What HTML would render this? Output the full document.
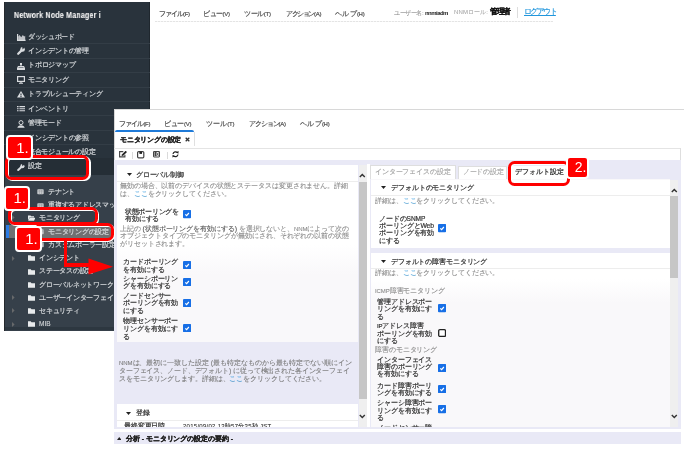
<!DOCTYPE html>
<html><head><meta charset="utf-8"><style>
html,body{margin:0;padding:0;width:687px;height:449px;overflow:hidden;background:#fff;position:relative}
body{font-family:"Liberation Sans",sans-serif}
.t{position:absolute;white-space:nowrap;will-change:transform}
a{color:inherit}
</style></head><body>
<div style="position:absolute;left:4px;top:2px;width:146px;height:328.5px;background:#29333c"></div>
<div style="position:absolute;left:4px;top:173px;width:146px;height:157.5px;background:#36404a"></div>
<div style="position:absolute;left:4px;top:327.3px;width:146px;height:3.2px;background:#2d3740"></div>
<div style="position:absolute;left:4px;top:2px;width:1px;height:328.5px;background:#25292d"></div>
<div style="position:absolute;left:149px;top:2px;width:1px;height:171px;background:#1f272e"></div>
<div class="t" style="left:13.8px;top:10.60px;font-size:8.2px;line-height:10px;color:#f2f2f2;font-weight:bold;letter-spacing:0.25px;-webkit-text-stroke:0.1px #f2f2f2;transform:scaleX(0.86);transform-origin:0 50%">Network Node Manager i</div>
<div style="position:absolute;left:4px;top:43px;width:146px;height:1px;background:#333d46"></div>
<div style="position:absolute;left:4px;top:58px;width:146px;height:1px;background:#333d46"></div>
<div style="position:absolute;left:4px;top:72px;width:146px;height:1px;background:#333d46"></div>
<div style="position:absolute;left:4px;top:87px;width:146px;height:1px;background:#333d46"></div>
<div style="position:absolute;left:4px;top:101px;width:146px;height:1px;background:#333d46"></div>
<div style="position:absolute;left:4px;top:115px;width:146px;height:1px;background:#333d46"></div>
<div style="position:absolute;left:4px;top:130px;width:146px;height:1px;background:#333d46"></div>
<div style="position:absolute;left:4px;top:144px;width:146px;height:1px;background:#333d46"></div>
<div style="position:absolute;left:4px;top:158px;width:146px;height:1px;background:#333d46"></div>
<div style="position:absolute;left:4px;top:158px;width:146px;height:17px;background:#252e36"></div>
<div class="t" style="left:28px;top:31.70px;font-size:7px;line-height:10px;color:#d5d8db;letter-spacing:-0.333px;-webkit-text-stroke:0.18px #d5d8db;">ダッシュボード</div>
<div class="t" style="left:28px;top:46.40px;font-size:7px;line-height:10px;color:#d5d8db;letter-spacing:-0.25px;-webkit-text-stroke:0.18px #d5d8db;">インシデントの管理</div>
<div class="t" style="left:28px;top:60.40px;font-size:7px;line-height:10px;color:#d5d8db;letter-spacing:-0.25px;-webkit-text-stroke:0.18px #d5d8db;">トポロジマップ</div>
<div class="t" style="left:28px;top:74.60px;font-size:7px;line-height:10px;color:#d5d8db;letter-spacing:-0.26px;-webkit-text-stroke:0.18px #d5d8db;">モニタリング</div>
<div class="t" style="left:28px;top:89.00px;font-size:7px;line-height:10px;color:#d5d8db;letter-spacing:-0.25px;-webkit-text-stroke:0.18px #d5d8db;">トラブルシューティング</div>
<div class="t" style="left:28px;top:103.50px;font-size:7px;line-height:10px;color:#d5d8db;letter-spacing:-0.28px;-webkit-text-stroke:0.18px #d5d8db;">インベントリ</div>
<div class="t" style="left:28px;top:117.80px;font-size:7px;line-height:10px;color:#d5d8db;letter-spacing:-0.3px;-webkit-text-stroke:0.18px #d5d8db;">管理モード</div>
<div class="t" style="left:28px;top:132.50px;font-size:7px;line-height:10px;color:#d5d8db;letter-spacing:-0.25px;-webkit-text-stroke:0.18px #d5d8db;">インシデントの参照</div>
<div class="t" style="left:28px;top:147.00px;font-size:7px;line-height:10px;color:#d5d8db;letter-spacing:-0.256px;-webkit-text-stroke:0.18px #d5d8db;">統合モジュールの設定</div>
<div class="t" style="left:28px;top:161.00px;font-size:7px;line-height:10px;color:#d5d8db;letter-spacing:0.4px;-webkit-text-stroke:0.18px #d5d8db;">設定</div>
<svg style="position:absolute;left:17px;top:33.6px" width="9" height="7" viewBox="0 0 9 7"><path d="M0.6 0 V6.4 H8.6" stroke="#d9dcdf" stroke-width="1.2" fill="none"/><path d="M1.2 6 V2.5 L2.6 1 L4.2 3.2 L5.8 1 L7.2 2.5 L8.2 1.8 V6 Z" fill="#d9dcdf" opacity="0.85"/></svg>
<svg style="position:absolute;left:17px;top:47px" width="8" height="8" viewBox="0 0 8 8"><path d="M1.2 6.8 L4.6 3.4" stroke="#d9dcdf" stroke-width="2.2" stroke-linecap="round"/><circle cx="5.6" cy="2.4" r="2.3" fill="#d9dcdf"/><path d="M5.6 2.4 L8 0 L8 -1 L5 -1 Z" fill="#29333c"/></svg>
<svg style="position:absolute;left:17px;top:62.5px" width="8" height="7" viewBox="0 0 8 7"><rect x="3" y="0" width="2" height="2" fill="#d9dcdf"/><path d="M4 2 V3.5 M1 5 V3.5 H7 V5" stroke="#d9dcdf" stroke-width="1" fill="none"/><rect x="0" y="4.5" width="8" height="2.5" rx="0.5" fill="#d9dcdf"/></svg>
<svg style="position:absolute;left:17px;top:75.5px" width="8" height="8" viewBox="0 0 8 8"><rect x="0.6" y="0.6" width="6.8" height="4.8" stroke="#d9dcdf" stroke-width="1.2" fill="none"/><path d="M2 7.2 H6 M4 5.5 V7" stroke="#d9dcdf" stroke-width="1.1"/></svg>
<svg style="position:absolute;left:17.3px;top:90.6px" width="8" height="7" viewBox="0 0 8 7"><path d="M4 0 L8 6.6 H0 Z" fill="#d9dcdf"/><path d="M4 2.4 V4.4 M4 5.1 V6" stroke="#29333c" stroke-width="1.1"/></svg>
<svg style="position:absolute;left:17.4px;top:105.6px" width="8" height="6" viewBox="0 0 8 6"><path d="M0 0.6 H1.6 M2.4 0.6 H8 M0 2.7 H1.6 M2.4 2.7 H8 M0 4.8 H1.6 M2.4 4.8 H8" stroke="#d9dcdf" stroke-width="1.1"/></svg>
<svg style="position:absolute;left:17.4px;top:119.5px" width="8" height="8" viewBox="0 0 8 8"><circle cx="4" cy="2.6" r="2" stroke="#d9dcdf" stroke-width="1" fill="none"/><path d="M0.3 7.8 Q1 5.2 4 5.2 Q7 5.2 7.7 7.8 Z" fill="#d9dcdf"/></svg>
<svg style="position:absolute;left:17.4px;top:163.5px" width="8" height="7" viewBox="0 0 8 7"><path d="M1.2 6 L4.4 3" stroke="#d9dcdf" stroke-width="2" stroke-linecap="round"/><circle cx="5.4" cy="2.2" r="2.1" fill="#d9dcdf"/><path d="M5.4 2.2 L7.8 0 L7.8 -1 L4.8 -1 Z" fill="#252e36"/></svg>
<div style="position:absolute;left:8.9px;top:224.5px;width:104px;height:13px;background:#6f7072"></div>
<div style="position:absolute;left:6.2px;top:224.5px;width:2.7px;height:13.3px;background:#2a7be4"></div>
<div class="t" style="left:48px;top:187.10px;font-size:7px;line-height:10px;color:#d5d8db;letter-spacing:-0.22px;-webkit-text-stroke:0.18px #d5d8db;">テナント</div>
<svg style="position:absolute;left:37px;top:189.4px" width="7" height="5.5" viewBox="0 0 7 5.5"><rect x="0.3" y="0.3" width="6.4" height="4.9" rx="0.8" fill="#c7cacd"/><path d="M0 2 H7 M2.4 1 V5.5 M4.6 1 V5.5" stroke="#8d9196" stroke-width="0.5"/></svg>
<div class="t" style="left:48px;top:200.30px;font-size:7px;line-height:10px;color:#d5d8db;letter-spacing:-0.22px;-webkit-text-stroke:0.18px #d5d8db;">重複するアドレスマッピング</div>
<svg style="position:absolute;left:37px;top:202.6px" width="7" height="5.5" viewBox="0 0 7 5.5"><rect x="0.3" y="0.3" width="6.4" height="4.9" rx="0.8" fill="#c7cacd"/><path d="M0 2 H7 M2.4 1 V5.5 M4.6 1 V5.5" stroke="#8d9196" stroke-width="0.5"/></svg>
<div class="t" style="left:38.5px;top:212.90px;font-size:7px;line-height:10px;color:#d5d8db;letter-spacing:-0.22px;-webkit-text-stroke:0.18px #d5d8db;">モニタリング</div>
<svg style="position:absolute;left:27.6px;top:215.1px" width="7.5" height="6" viewBox="0 0 7.5 6"><path d="M0 0.5 H2.5 L3.2 1.3 H6 V2.5 H1.5 L0 5.5 Z" fill="#e8eaec"/><path d="M1.6 2.8 H7.5 L6 5.8 H0.2 Z" fill="#e8eaec"/></svg>
<svg style="position:absolute;left:11.6px;top:215.4px" width="3" height="5" viewBox="0 0 3 5"><path d="M0 0 L2.6 2.5 L0 5 Z" fill="#67696b"/></svg>
<div class="t" style="left:48px;top:226.70px;font-size:7px;line-height:10px;color:#d5d8db;letter-spacing:-0.22px;-webkit-text-stroke:0.18px #d5d8db;">モニタリングの設定</div>
<svg style="position:absolute;left:37px;top:229.0px" width="7" height="5.5" viewBox="0 0 7 5.5"><rect x="0.3" y="0.3" width="6.4" height="4.9" rx="0.8" fill="#c7cacd"/><path d="M0 2 H7 M2.4 1 V5.5 M4.6 1 V5.5" stroke="#8d9196" stroke-width="0.5"/></svg>
<div class="t" style="left:48px;top:239.90px;font-size:7px;line-height:10px;color:#d5d8db;letter-spacing:-0.22px;-webkit-text-stroke:0.18px #d5d8db;">カスタムポーラー設定</div>
<svg style="position:absolute;left:37px;top:242.2px" width="7" height="5.5" viewBox="0 0 7 5.5"><rect x="0.3" y="0.3" width="6.4" height="4.9" rx="0.8" fill="#c7cacd"/><path d="M0 2 H7 M2.4 1 V5.5 M4.6 1 V5.5" stroke="#8d9196" stroke-width="0.5"/></svg>
<div class="t" style="left:39.2px;top:253.10px;font-size:7px;line-height:10px;color:#d5d8db;letter-spacing:-0.22px;-webkit-text-stroke:0.18px #d5d8db;">インシデント</div>
<svg style="position:absolute;left:27.6px;top:255.3px" width="7" height="6" viewBox="0 0 7 6"><path d="M0 0.3 H2.7 L3.5 1.2 H7 V5.8 H0 Z" fill="#e8eaec"/></svg>
<svg style="position:absolute;left:11.6px;top:255.6px" width="3" height="5" viewBox="0 0 3 5"><path d="M0 0 L2.6 2.5 L0 5 Z" fill="#67696b"/></svg>
<div class="t" style="left:39.2px;top:266.30px;font-size:7px;line-height:10px;color:#d5d8db;letter-spacing:-0.22px;-webkit-text-stroke:0.18px #d5d8db;">ステータスの設定</div>
<svg style="position:absolute;left:27.6px;top:268.5px" width="7" height="6" viewBox="0 0 7 6"><path d="M0 0.3 H2.7 L3.5 1.2 H7 V5.8 H0 Z" fill="#e8eaec"/></svg>
<div class="t" style="left:39.2px;top:279.50px;font-size:7px;line-height:10px;color:#d5d8db;letter-spacing:-0.22px;-webkit-text-stroke:0.18px #d5d8db;">グローバルネットワーク管理</div>
<svg style="position:absolute;left:27.6px;top:281.7px" width="7" height="6" viewBox="0 0 7 6"><path d="M0 0.3 H2.7 L3.5 1.2 H7 V5.8 H0 Z" fill="#e8eaec"/></svg>
<div class="t" style="left:39.2px;top:292.70px;font-size:7px;line-height:10px;color:#d5d8db;letter-spacing:-0.22px;-webkit-text-stroke:0.18px #d5d8db;">ユーザーインターフェイス</div>
<svg style="position:absolute;left:27.6px;top:294.9px" width="7" height="6" viewBox="0 0 7 6"><path d="M0 0.3 H2.7 L3.5 1.2 H7 V5.8 H0 Z" fill="#e8eaec"/></svg>
<svg style="position:absolute;left:11.6px;top:295.2px" width="3" height="5" viewBox="0 0 3 5"><path d="M0 0 L2.6 2.5 L0 5 Z" fill="#67696b"/></svg>
<div class="t" style="left:39.2px;top:305.90px;font-size:7px;line-height:10px;color:#d5d8db;letter-spacing:-0.22px;-webkit-text-stroke:0.18px #d5d8db;">セキュリティ</div>
<svg style="position:absolute;left:27.6px;top:308.1px" width="7" height="6" viewBox="0 0 7 6"><path d="M0 0.3 H2.7 L3.5 1.2 H7 V5.8 H0 Z" fill="#e8eaec"/></svg>
<svg style="position:absolute;left:11.6px;top:308.4px" width="3" height="5" viewBox="0 0 3 5"><path d="M0 0 L2.6 2.5 L0 5 Z" fill="#67696b"/></svg>
<div class="t" style="left:39.2px;top:319.10px;font-size:6.5px;line-height:10px;color:#d5d8db;-webkit-text-stroke:0.1px #d5d8db;">MIB</div>
<svg style="position:absolute;left:27.6px;top:321.3px" width="7" height="6" viewBox="0 0 7 6"><path d="M0 0.3 H2.7 L3.5 1.2 H7 V5.8 H0 Z" fill="#e8eaec"/></svg>
<svg style="position:absolute;left:11.6px;top:321.6px" width="3" height="5" viewBox="0 0 3 5"><path d="M0 0 L2.6 2.5 L0 5 Z" fill="#67696b"/></svg>
<div class="t" style="left:158.9px;top:8.60px;font-size:7px;line-height:10px;color:#505050;letter-spacing:-1.0px;-webkit-text-stroke:0.2px #505050;">ファイル<span style="font-size:6px;letter-spacing:-0.3px">(F)</span></div>
<div class="t" style="left:203px;top:8.60px;font-size:7px;line-height:10px;color:#505050;letter-spacing:-0.5px;-webkit-text-stroke:0.2px #505050;">ビュー<span style="font-size:6px;letter-spacing:-0.3px">(V)</span></div>
<div class="t" style="left:244.3px;top:8.60px;font-size:7px;line-height:10px;color:#505050;letter-spacing:-0.4px;-webkit-text-stroke:0.2px #505050;">ツール<span style="font-size:6px;letter-spacing:-0.3px">(T)</span></div>
<div class="t" style="left:285.6px;top:8.60px;font-size:7px;line-height:10px;color:#505050;letter-spacing:-1.4px;-webkit-text-stroke:0.2px #505050;">アクション<span style="font-size:6px;letter-spacing:-0.3px">(A)</span></div>
<div class="t" style="left:334.7px;top:8.60px;font-size:7px;line-height:10px;color:#505050;letter-spacing:0.3px;-webkit-text-stroke:0.2px #505050;">ヘルプ<span style="font-size:6px;letter-spacing:-0.3px">(H)</span></div>
<div class="t" style="left:394px;top:7.60px;font-size:6px;line-height:10px;color:#999;letter-spacing:-0.394px;-webkit-text-stroke:0.1px #999;">ユーザー名:</div>
<div class="t" style="left:425px;top:7.50px;font-size:6px;line-height:10px;color:#222;font-weight:bold;letter-spacing:-0.545px;">nnmiadm</div>
<div class="t" style="left:454.2px;top:7.30px;font-size:6px;line-height:10px;color:#aaa;letter-spacing:0.109px;-webkit-text-stroke:0.1px #aaa;">NNMロール:</div>
<div class="t" style="left:490px;top:7.40px;font-size:8px;line-height:10px;color:#111;font-weight:bold;letter-spacing:-1.5px;-webkit-text-stroke:0.15px #111;">管理者</div>
<div style="position:absolute;left:516.5px;top:7px;width:1px;height:11px;background:#ddd"></div>
<div class="t" style="left:524.1px;top:7.30px;font-size:8px;line-height:10px;color:#2196dc;letter-spacing:-1.625px;-webkit-text-stroke:0.12px #2196dc;text-decoration:underline;text-underline-offset:0.5px">ログアウト</div>
<div style="position:absolute;left:155px;top:21px;width:398px;height:1px;background:repeating-linear-gradient(90deg,#e4e4e4 0 2px,#f6f6f6 2px 3px)"></div>
<div style="position:absolute;left:114px;top:109px;width:570px;height:337px;background:#fff;border-top:1px solid #d8d8d8;border-left:1px solid #d8d8d8;box-sizing:border-box"></div>
<div class="t" style="left:119.1px;top:119.00px;font-size:7px;line-height:10px;color:#505050;letter-spacing:-0.9px;-webkit-text-stroke:0.2px #505050;">ファイル<span style="font-size:6px;letter-spacing:-0.3px">(F)</span></div>
<div class="t" style="left:164.2px;top:119.00px;font-size:7px;line-height:10px;color:#505050;letter-spacing:-0.3px;-webkit-text-stroke:0.2px #505050;">ビュー<span style="font-size:6px;letter-spacing:-0.3px">(V)</span></div>
<div class="t" style="left:206px;top:119.00px;font-size:7px;line-height:10px;color:#505050;letter-spacing:0.1px;-webkit-text-stroke:0.2px #505050;">ツール<span style="font-size:6px;letter-spacing:-0.3px">(T)</span></div>
<div class="t" style="left:249px;top:119.00px;font-size:7px;line-height:10px;color:#505050;letter-spacing:-1.1px;-webkit-text-stroke:0.2px #505050;">アクション<span style="font-size:6px;letter-spacing:-0.3px">(A)</span></div>
<div class="t" style="left:299.5px;top:119.00px;font-size:7px;line-height:10px;color:#505050;letter-spacing:0.3px;-webkit-text-stroke:0.2px #505050;">ヘルプ<span style="font-size:6px;letter-spacing:-0.3px">(H)</span></div>
<div style="position:absolute;left:115px;top:130px;width:79px;height:2.2px;background:#1e7ad8;border-radius:2px 2px 0 0"></div>
<div style="position:absolute;left:193.5px;top:132px;width:1px;height:14px;background:#e0e0e0"></div>
<div class="t" style="left:119.7px;top:134.70px;font-size:7px;line-height:10px;color:#2a2a2a;font-weight:bold;letter-spacing:-0.213px;-webkit-text-stroke:0.25px #2a2a2a;">モニタリングの設定</div>
<svg style="position:absolute;left:184.5px;top:137.3px" width="5" height="5" viewBox="0 0 5 5"><path d="M0.7 0.7 L4.3 4.3 M4.3 0.7 L0.7 4.3" stroke="#333" stroke-width="1.3"/></svg>
<div style="position:absolute;left:114px;top:148px;width:566px;height:1px;background:#e4e4e4"></div>
<div style="position:absolute;left:679.5px;top:148px;width:1px;height:12px;background:#dedede"></div>
<svg style="position:absolute;left:119px;top:151px" width="8.5" height="7" viewBox="0 0 8.5 7"><path d="M4.3 0.6 H0.6 V5.9 H5.9 V3.8" stroke="#444" stroke-width="1.1" fill="none"/><path d="M2.6 5 L2.9 3.4 L6.6 -0.2 L8 1.1 L4.2 4.7 Z" fill="#222"/></svg>
<div style="position:absolute;left:132px;top:152px;width:1.2px;height:7px;background:#dadada"></div>
<svg style="position:absolute;left:137px;top:151px" width="7.5" height="7.5" viewBox="0 0 7.5 7.5"><rect x="0.6" y="0.6" width="6.2" height="6.2" rx="1" stroke="#444" stroke-width="1.2" fill="none"/><rect x="2.4" y="0.6" width="2.6" height="2.3" fill="#222"/></svg>
<svg style="position:absolute;left:153.2px;top:151.3px" width="7" height="6.5" viewBox="0 0 7 6.5"><rect x="0.55" y="0.55" width="5.9" height="5.4" rx="0.6" stroke="#444" stroke-width="1.1" fill="none"/><rect x="1.5" y="1" width="2" height="4.2" fill="#444"/><path d="M3.8 1.5 L5.6 4.8 M5.6 1.5 L3.8 4.8" stroke="#444" stroke-width="0.7"/></svg>
<div style="position:absolute;left:166.5px;top:152px;width:1.2px;height:7px;background:#dadada"></div>
<svg style="position:absolute;left:171.8px;top:151.2px" width="7" height="6.5" viewBox="0 0 7 6.5"><path d="M1 3 A2.6 2.6 0 0 1 5.6 1.8" stroke="#222" stroke-width="1.2" fill="none"/><path d="M6 3.5 A2.6 2.6 0 0 1 1.4 4.7" stroke="#222" stroke-width="1.2" fill="none"/><path d="M4.3 1.2 L6.6 0 L6.4 2.8 Z M2.7 5.3 L0.4 6.5 L0.6 3.7 Z" fill="#222"/></svg>
<div style="position:absolute;left:114px;top:159.5px;width:567px;height:273px;background:#e9e9f6"></div>
<div style="position:absolute;left:117px;top:164.8px;width:241px;height:177.5px;background:#fff"></div>
<div style="position:absolute;left:117px;top:245px;width:241px;height:97px;background:linear-gradient(#fff,#f9f8fa 30px)"></div>
<div style="position:absolute;left:358.6px;top:164.5px;width:8px;height:263px;background:#efefef"></div>
<div style="position:absolute;left:358.6px;top:181.8px;width:8px;height:217.2px;background:#c6c6c6"></div>
<svg style="position:absolute;left:359.3px;top:173px" width="7" height="5" viewBox="0 0 7 5"><path d="M0.8 4 L3.3 1.4 L5.8 4" stroke="#333" stroke-width="1.4" fill="none"/></svg>
<svg style="position:absolute;left:359.3px;top:413.8px" width="7" height="5" viewBox="0 0 7 5"><path d="M0.8 1 L3.3 3.6 L5.8 1" stroke="#333" stroke-width="1.4" fill="none"/></svg>
<div style="position:absolute;left:366.5px;top:163.8px;width:3.3px;height:268.5px;background:#fff"></div>
<div class="t" style="left:136.2px;top:169.60px;font-size:7px;line-height:10px;color:#333;letter-spacing:-0.25px;-webkit-text-stroke:0.2px #333;">グローバル制御</div>
<svg style="position:absolute;left:126.5px;top:172.5px" width="5" height="3" viewBox="0 0 5 3"><path d="M0 0 H5 L2.5 3 Z" fill="#222"/></svg>
<div style="position:absolute;left:117px;top:181px;width:241px;height:1px;background:#ededed"></div>
<div class="t" style="left:120.4px;top:181.00px;font-size:7px;line-height:10px;color:#8c8c8c;letter-spacing:-0.094px;-webkit-text-stroke:0.1px #8c8c8c;">無効の場合、以前のデバイスの状態とステータスは変更されません。詳細</div>
<div class="t" style="left:120.4px;top:188.90px;font-size:7px;line-height:10px;color:#8c8c8c;letter-spacing:-0.1px;-webkit-text-stroke:0.1px #8c8c8c;">は、<span style="color:#1590e0">ここ</span>をクリックしてください。</div>
<div class="t" style="left:124.7px;top:206.50px;font-size:7px;line-height:10px;color:#333;letter-spacing:-0.286px;-webkit-text-stroke:0.2px #333;">状態ポーリングを</div>
<div class="t" style="left:124.7px;top:213.60px;font-size:7px;line-height:10px;color:#333;letter-spacing:-0.15px;-webkit-text-stroke:0.2px #333;">有効にする</div>
<div class="t" style="left:120.4px;top:223.90px;font-size:7px;line-height:10px;color:#8c8c8c;letter-spacing:-0.09px;-webkit-text-stroke:0.1px #8c8c8c;">上記の <span style="color:#5a5a5a;-webkit-text-stroke:0.12px #5a5a5a">(状態ポーリングを有効にする)</span> を選択しないと、<span style="font-size:6px">NNM</span>によって次の</div>
<div class="t" style="left:120.4px;top:231.00px;font-size:7px;line-height:10px;color:#8c8c8c;letter-spacing:-0.062px;-webkit-text-stroke:0.1px #8c8c8c;">オブジェクトタイプのモニタリングが無効にされ、それぞれの以前の状態</div>
<div class="t" style="left:120.4px;top:238.80px;font-size:7px;line-height:10px;color:#8c8c8c;letter-spacing:-0.1px;-webkit-text-stroke:0.1px #8c8c8c;">がリセットされます。</div>
<svg style="position:absolute;left:182.8px;top:210.2px" width="8.4" height="8.4" viewBox="0 0 8.4 8.4"><rect x="0" y="0" width="8.2" height="8.2" rx="1" fill="#176fe6"/><path d="M2.3 4.4 L3.6 5.6 L5.9 3" stroke="#fff" stroke-width="1.2" fill="none"/></svg>
<div class="t" style="left:123px;top:256.60px;font-size:7px;line-height:10px;color:#333;letter-spacing:-0.1px;-webkit-text-stroke:0.2px #333;">カードポーリング</div>
<div class="t" style="left:123px;top:264.50px;font-size:7px;line-height:10px;color:#333;letter-spacing:-0.1px;-webkit-text-stroke:0.2px #333;">を有効にする</div>
<svg style="position:absolute;left:182.8px;top:260.9px" width="8.4" height="8.4" viewBox="0 0 8.4 8.4"><rect x="0" y="0" width="8.2" height="8.2" rx="1" fill="#176fe6"/><path d="M2.3 4.4 L3.6 5.6 L5.9 3" stroke="#fff" stroke-width="1.2" fill="none"/></svg>
<div class="t" style="left:123px;top:273.50px;font-size:7px;line-height:10px;color:#333;letter-spacing:-0.1px;-webkit-text-stroke:0.2px #333;">シャーシポーリン</div>
<div class="t" style="left:123px;top:281.40px;font-size:7px;line-height:10px;color:#333;letter-spacing:-0.1px;-webkit-text-stroke:0.2px #333;">グを有効にする</div>
<svg style="position:absolute;left:182.8px;top:277.8px" width="8.4" height="8.4" viewBox="0 0 8.4 8.4"><rect x="0" y="0" width="8.2" height="8.2" rx="1" fill="#176fe6"/><path d="M2.3 4.4 L3.6 5.6 L5.9 3" stroke="#fff" stroke-width="1.2" fill="none"/></svg>
<div class="t" style="left:123px;top:290.50px;font-size:7px;line-height:10px;color:#333;letter-spacing:-0.1px;-webkit-text-stroke:0.2px #333;">ノードセンサー</div>
<div class="t" style="left:123px;top:298.40px;font-size:7px;line-height:10px;color:#333;letter-spacing:-0.1px;-webkit-text-stroke:0.2px #333;">ポーリングを有効</div>
<div class="t" style="left:123px;top:306.30px;font-size:7px;line-height:10px;color:#333;letter-spacing:-0.1px;-webkit-text-stroke:0.2px #333;">にする</div>
<svg style="position:absolute;left:182.8px;top:299.0px" width="8.4" height="8.4" viewBox="0 0 8.4 8.4"><rect x="0" y="0" width="8.2" height="8.2" rx="1" fill="#176fe6"/><path d="M2.3 4.4 L3.6 5.6 L5.9 3" stroke="#fff" stroke-width="1.2" fill="none"/></svg>
<div class="t" style="left:123px;top:315.80px;font-size:7px;line-height:10px;color:#333;letter-spacing:-0.1px;-webkit-text-stroke:0.2px #333;">物理センサーポー</div>
<div class="t" style="left:123px;top:323.70px;font-size:7px;line-height:10px;color:#333;letter-spacing:-0.1px;-webkit-text-stroke:0.2px #333;">リングを有効にす</div>
<div class="t" style="left:123px;top:331.60px;font-size:7px;line-height:10px;color:#333;letter-spacing:-0.1px;-webkit-text-stroke:0.2px #333;">る</div>
<svg style="position:absolute;left:182.8px;top:323.9px" width="8.4" height="8.4" viewBox="0 0 8.4 8.4"><rect x="0" y="0" width="8.2" height="8.2" rx="1" fill="#176fe6"/><path d="M2.3 4.4 L3.6 5.6 L5.9 3" stroke="#fff" stroke-width="1.2" fill="none"/></svg>
<div class="t" style="left:119.4px;top:358.30px;font-size:7px;line-height:10px;color:#7c7c7c;letter-spacing:-0.056px;-webkit-text-stroke:0.1px #7c7c7c;"><span style="font-size:6px">NNM</span>は、最初に一致した設定 (最も特定なものから最も特定でない順にイン</div>
<div class="t" style="left:119.4px;top:365.90px;font-size:7px;line-height:10px;color:#7c7c7c;letter-spacing:-0.126px;-webkit-text-stroke:0.1px #7c7c7c;">ターフェイス、ノード、デフォルト) に従って検出された各インターフェイ</div>
<div class="t" style="left:119.4px;top:374.10px;font-size:7px;line-height:10px;color:#7c7c7c;letter-spacing:-0.1px;-webkit-text-stroke:0.1px #7c7c7c;">スをモニタリングします。詳細は、<span style="color:#1590e0">ここ</span>をクリックしてください。</div>
<div style="position:absolute;left:117px;top:404px;width:241px;height:23.5px;background:#fff"></div>
<svg style="position:absolute;left:126px;top:411.5px" width="5" height="3" viewBox="0 0 5 3"><path d="M0 0 H5 L2.5 3 Z" fill="#222"/></svg>
<div class="t" style="left:135.6px;top:408.00px;font-size:7px;line-height:10px;color:#333;-webkit-text-stroke:0.2px #333;">登録</div>
<div style="position:absolute;left:117px;top:420px;width:241px;height:1px;background:#ededed"></div>
<div class="t" style="left:124.3px;top:420.50px;font-size:7px;line-height:10px;color:#333;letter-spacing:-0.16px;-webkit-text-stroke:0.2px #333;">最終変更日時</div>
<div class="t" style="left:183px;top:421.00px;font-size:6px;line-height:10px;color:#333;letter-spacing:0.267px;-webkit-text-stroke:0.1px #333;">2015/09/02 13時57分35秒 JST</div>
<div style="position:absolute;left:370px;top:165px;width:86px;height:14px;background:#fff;border:1px solid #dedede;border-bottom:none;box-sizing:border-box"></div>
<div class="t" style="left:375.4px;top:167.20px;font-size:7px;line-height:10px;color:#a0a0a0;letter-spacing:-0.14px;-webkit-text-stroke:0.1px #a0a0a0;">インターフェイスの設定</div>
<div style="position:absolute;left:457.6px;top:165.5px;width:49.6px;height:13.5px;background:#fff;border:1px solid #dedede;border-bottom:none;box-sizing:border-box"></div>
<div class="t" style="left:463px;top:167.20px;font-size:7px;line-height:10px;color:#a0a0a0;letter-spacing:-0.3px;-webkit-text-stroke:0.1px #a0a0a0;">ノードの設定</div>
<div style="position:absolute;left:507.5px;top:165.5px;width:62px;height:14px;background:#fff"></div>
<div class="t" style="left:514.6px;top:166.80px;font-size:7px;line-height:10px;color:#333;font-weight:bold;letter-spacing:-0.05px;">デフォルト設定</div>
<div style="position:absolute;left:369.8px;top:179px;width:300.2px;height:249px;background:#f9f8fa"></div>
<div style="position:absolute;left:369.8px;top:179px;width:1.6px;height:249px;background:#e9e9f6"></div>
<div style="position:absolute;left:669.5px;top:179.7px;width:8.5px;height:247.8px;background:#efefef"></div>
<div style="position:absolute;left:669.5px;top:196.4px;width:8.5px;height:81.9px;background:#c6c6c6"></div>
<svg style="position:absolute;left:670.5px;top:188px" width="7" height="5" viewBox="0 0 7 5"><path d="M0.8 4 L3.3 1.4 L5.8 4" stroke="#333" stroke-width="1.4" fill="none"/></svg>
<svg style="position:absolute;left:670.5px;top:413.8px" width="7" height="5" viewBox="0 0 7 5"><path d="M0.8 1 L3.3 3.6 L5.8 1" stroke="#333" stroke-width="1.4" fill="none"/></svg>
<div style="position:absolute;left:371px;top:179.5px;width:298.5px;height:68px;background:#fff"></div>
<svg style="position:absolute;left:381.3px;top:186.3px" width="5" height="3" viewBox="0 0 5 3"><path d="M0 0 H5 L2.5 3 Z" fill="#222"/></svg>
<div class="t" style="left:390.6px;top:183.40px;font-size:7px;line-height:10px;color:#333;letter-spacing:-0.091px;-webkit-text-stroke:0.2px #333;">デフォルトのモニタリング</div>
<div style="position:absolute;left:371px;top:195px;width:299px;height:1px;background:#ededed"></div>
<div class="t" style="left:374.8px;top:195.70px;font-size:7px;line-height:10px;color:#8c8c8c;letter-spacing:-0.1px;-webkit-text-stroke:0.1px #8c8c8c;">詳細は、<span style="color:#1590e0">ここ</span>をクリックしてください。</div>
<div class="t" style="left:379.1px;top:213.60px;font-size:7px;line-height:10px;color:#333;letter-spacing:-0.1px;-webkit-text-stroke:0.2px #333;">ノードの<span style="font-size:6.6px">SNMP</span></div>
<div class="t" style="left:379.1px;top:220.90px;font-size:7px;line-height:10px;color:#333;letter-spacing:-0.1px;-webkit-text-stroke:0.2px #333;">ポーリングと<span style="font-size:6.8px">Web</span></div>
<div class="t" style="left:379.1px;top:228.20px;font-size:7px;line-height:10px;color:#333;letter-spacing:-0.1px;-webkit-text-stroke:0.2px #333;">ポーリングを有効</div>
<div class="t" style="left:379.1px;top:235.50px;font-size:7px;line-height:10px;color:#333;letter-spacing:-0.1px;-webkit-text-stroke:0.2px #333;">にする</div>
<svg style="position:absolute;left:437.9px;top:224.3px" width="8.4" height="8.4" viewBox="0 0 8.4 8.4"><rect x="0" y="0" width="8.2" height="8.2" rx="1" fill="#176fe6"/><path d="M2.3 4.4 L3.6 5.6 L5.9 3" stroke="#fff" stroke-width="1.2" fill="none"/></svg>
<div style="position:absolute;left:371px;top:247.5px;width:299px;height:5.5px;background:#e9e9f6"></div>
<div style="position:absolute;left:371px;top:253px;width:298.5px;height:26px;background:#fff"></div>
<div style="position:absolute;left:371px;top:279px;width:298.5px;height:24px;background:linear-gradient(#fff,#f9f8fa)"></div>
<svg style="position:absolute;left:381.3px;top:260.3px" width="5" height="3" viewBox="0 0 5 3"><path d="M0 0 H5 L2.5 3 Z" fill="#222"/></svg>
<div class="t" style="left:390.5px;top:257.30px;font-size:7px;line-height:10px;color:#333;letter-spacing:-0.131px;-webkit-text-stroke:0.2px #333;">デフォルトの障害モニタリング</div>
<div style="position:absolute;left:371px;top:268.2px;width:299px;height:1px;background:#ededed"></div>
<div class="t" style="left:375px;top:268.30px;font-size:7px;line-height:10px;color:#8c8c8c;letter-spacing:-0.1px;-webkit-text-stroke:0.1px #8c8c8c;">詳細は、<span style="color:#1590e0">ここ</span>をクリックしてください。</div>
<div class="t" style="left:375px;top:286.00px;font-size:7px;line-height:10px;color:#8c8c8c;letter-spacing:-0.1px;-webkit-text-stroke:0.1px #8c8c8c;"><span style="font-size:6px">ICMP</span>障害モニタリング</div>
<div class="t" style="left:377.4px;top:296.50px;font-size:7px;line-height:10px;color:#333;letter-spacing:-0.1px;-webkit-text-stroke:0.2px #333;">管理アドレスポー</div>
<div class="t" style="left:377.4px;top:304.00px;font-size:7px;line-height:10px;color:#333;letter-spacing:-0.1px;-webkit-text-stroke:0.2px #333;">リングを有効にす</div>
<div class="t" style="left:377.4px;top:311.50px;font-size:7px;line-height:10px;color:#333;letter-spacing:-0.1px;-webkit-text-stroke:0.2px #333;">る</div>
<svg style="position:absolute;left:437.7px;top:304.2px" width="8.4" height="8.4" viewBox="0 0 8.4 8.4"><rect x="0" y="0" width="8.2" height="8.2" rx="1" fill="#176fe6"/><path d="M2.3 4.4 L3.6 5.6 L5.9 3" stroke="#fff" stroke-width="1.2" fill="none"/></svg>
<div class="t" style="left:377.4px;top:321.30px;font-size:7px;line-height:10px;color:#333;letter-spacing:-0.1px;-webkit-text-stroke:0.2px #333;"><span style="font-size:6px">IP</span>アドレス障害</div>
<div class="t" style="left:377.4px;top:328.80px;font-size:7px;line-height:10px;color:#333;letter-spacing:-0.1px;-webkit-text-stroke:0.2px #333;">ポーリングを有効</div>
<div class="t" style="left:377.4px;top:336.30px;font-size:7px;line-height:10px;color:#333;letter-spacing:-0.1px;-webkit-text-stroke:0.2px #333;">にする</div>
<svg style="position:absolute;left:437.7px;top:328.9px" width="8.4" height="8.4" viewBox="0 0 8.4 8.4"><rect x="0.7" y="0.7" width="6.8" height="6.8" rx="1.2" fill="#fff" stroke="#222" stroke-width="1.3"/></svg>
<div class="t" style="left:375px;top:344.90px;font-size:7px;line-height:10px;color:#8c8c8c;letter-spacing:-0.1px;-webkit-text-stroke:0.1px #8c8c8c;">障害のモニタリング</div>
<div class="t" style="left:377.4px;top:354.50px;font-size:7px;line-height:10px;color:#333;letter-spacing:-0.1px;-webkit-text-stroke:0.2px #333;">インターフェイス</div>
<div class="t" style="left:377.4px;top:361.80px;font-size:7px;line-height:10px;color:#333;letter-spacing:-0.1px;-webkit-text-stroke:0.2px #333;">障害のポーリング</div>
<div class="t" style="left:377.4px;top:369.10px;font-size:7px;line-height:10px;color:#333;letter-spacing:-0.1px;-webkit-text-stroke:0.2px #333;">を有効にする</div>
<svg style="position:absolute;left:437.7px;top:363.8px" width="8.4" height="8.4" viewBox="0 0 8.4 8.4"><rect x="0" y="0" width="8.2" height="8.2" rx="1" fill="#176fe6"/><path d="M2.3 4.4 L3.6 5.6 L5.9 3" stroke="#fff" stroke-width="1.2" fill="none"/></svg>
<div class="t" style="left:377.4px;top:380.50px;font-size:7px;line-height:10px;color:#333;letter-spacing:-0.1px;-webkit-text-stroke:0.2px #333;">カード障害ポーリ</div>
<div class="t" style="left:377.4px;top:387.80px;font-size:7px;line-height:10px;color:#333;letter-spacing:-0.1px;-webkit-text-stroke:0.2px #333;">ングを有効にする</div>
<svg style="position:absolute;left:437.7px;top:384.7px" width="8.4" height="8.4" viewBox="0 0 8.4 8.4"><rect x="0" y="0" width="8.2" height="8.2" rx="1" fill="#176fe6"/><path d="M2.3 4.4 L3.6 5.6 L5.9 3" stroke="#fff" stroke-width="1.2" fill="none"/></svg>
<div class="t" style="left:377.4px;top:398.30px;font-size:7px;line-height:10px;color:#333;letter-spacing:-0.1px;-webkit-text-stroke:0.2px #333;">シャーシ障害ポー</div>
<div class="t" style="left:377.4px;top:405.60px;font-size:7px;line-height:10px;color:#333;letter-spacing:-0.1px;-webkit-text-stroke:0.2px #333;">リングを有効にす</div>
<div class="t" style="left:377.4px;top:412.90px;font-size:7px;line-height:10px;color:#333;letter-spacing:-0.1px;-webkit-text-stroke:0.2px #333;">る</div>
<svg style="position:absolute;left:437.7px;top:405.3px" width="8.4" height="8.4" viewBox="0 0 8.4 8.4"><rect x="0" y="0" width="8.2" height="8.2" rx="1" fill="#176fe6"/><path d="M2.3 4.4 L3.6 5.6 L5.9 3" stroke="#fff" stroke-width="1.2" fill="none"/></svg>
<div class="t" style="left:377.4px;top:423.30px;font-size:7px;line-height:10px;color:#333;letter-spacing:-0.1px;-webkit-text-stroke:0.2px #333;">ノードセンサー障</div>
<div style="position:absolute;left:114px;top:427.3px;width:567px;height:1.5px;background:#e9e9f6"></div>
<div style="position:absolute;left:114px;top:428.8px;width:567px;height:3.5px;background:#fff"></div>
<div style="position:absolute;left:114px;top:432.3px;width:567px;height:11.8px;background:#e9e9f6"></div>
<div style="position:absolute;left:114px;top:444.1px;width:567px;height:2px;background:#fff"></div>
<svg style="position:absolute;left:116.8px;top:436.8px" width="4.5" height="3" viewBox="0 0 4.5 3"><path d="M0 3 H4.5 L2.25 0 Z" fill="#222"/></svg>
<div class="t" style="left:126.2px;top:433.90px;font-size:7px;line-height:10px;color:#222;font-weight:bold;letter-spacing:-0.083px;-webkit-text-stroke:0.25px #222;">分析 - モニタリングの設定の要約 -</div>
<div style="position:absolute;left:6.4px;top:156.3px;width:84.3px;height:25.0px;border:3.8px solid #fff;border-radius:6.5px;box-sizing:border-box"></div>
<div style="position:absolute;left:5px;top:154.9px;width:84.3px;height:25.0px;border:3.8px solid #f00;border-radius:6.5px;box-sizing:border-box"></div>
<div style="position:absolute;left:9.4px;top:207.9px;width:89.8px;height:18.5px;border:3.6px solid #fff;border-radius:6.5px;box-sizing:border-box"></div>
<div style="position:absolute;left:8px;top:206.5px;width:89.8px;height:18.5px;border:3.6px solid #f00;border-radius:6.5px;box-sizing:border-box"></div>
<div style="position:absolute;left:36.4px;top:223.9px;width:78.7px;height:18.099999999999994px;border:3.8px solid #fff;border-radius:6.5px;box-sizing:border-box"></div>
<div style="position:absolute;left:35px;top:222.5px;width:78.7px;height:18.099999999999994px;border:3.8px solid #f00;border-radius:6.5px;box-sizing:border-box"></div>
<div style="position:absolute;left:509.4px;top:162.3px;width:62px;height:24.900000000000006px;border:3.5px solid #fff;border-radius:6.5px;box-sizing:border-box"></div>
<div style="position:absolute;left:508px;top:160.9px;width:62px;height:24.900000000000006px;border:3.5px solid #f00;border-radius:6.5px;box-sizing:border-box"></div>
<div style="position:absolute;left:5.9px;top:134.7px;width:27.0px;height:25.80000000000001px;background:#f00;border:2px solid #fff;border-radius:4px;box-sizing:border-box"></div>
<div class="t" style="left:8.9px;top:134.7px;width:27.0px;height:25.80000000000001px;color:#fff;font-size:15px;line-height:25.80000000000001px;text-align:center">1.</div>
<div style="position:absolute;left:4.2px;top:186.1px;width:25.6px;height:24.80000000000001px;background:#f00;border:2px solid #fff;border-radius:4px;box-sizing:border-box"></div>
<div class="t" style="left:6.7px;top:186.1px;width:25.6px;height:24.80000000000001px;color:#fff;font-size:15px;line-height:24.80000000000001px;text-align:center">1.</div>
<div style="position:absolute;left:15.1px;top:225.7px;width:26.799999999999997px;height:26.100000000000023px;background:#f00;border:2px solid #fff;border-radius:4px;box-sizing:border-box"></div>
<div class="t" style="left:18.1px;top:225.7px;width:26.799999999999997px;height:26.100000000000023px;color:#fff;font-size:15px;line-height:26.100000000000023px;text-align:center">1.</div>
<div style="position:absolute;left:566.2px;top:155.8px;width:23.299999999999955px;height:23.299999999999983px;background:#f00;border:2px solid #fff;border-radius:4px;box-sizing:border-box"></div>
<div class="t" style="left:568.7px;top:155.8px;width:23.299999999999955px;height:23.299999999999983px;color:#fff;font-size:14px;line-height:23.299999999999983px;text-align:center">2.</div>
<div style="position:absolute;left:63.5px;top:240.8px;width:3.5px;height:25px;background:#f00"></div>
<div style="position:absolute;left:63.5px;top:262.5px;width:26px;height:4px;background:#f00"></div>
<svg style="position:absolute;left:88px;top:257.5px" width="26" height="17" viewBox="0 0 26 17"><path d="M0.5 0.5 L25 8.8 L0.5 16.5 Z" fill="#f00"/></svg>
</body></html>
